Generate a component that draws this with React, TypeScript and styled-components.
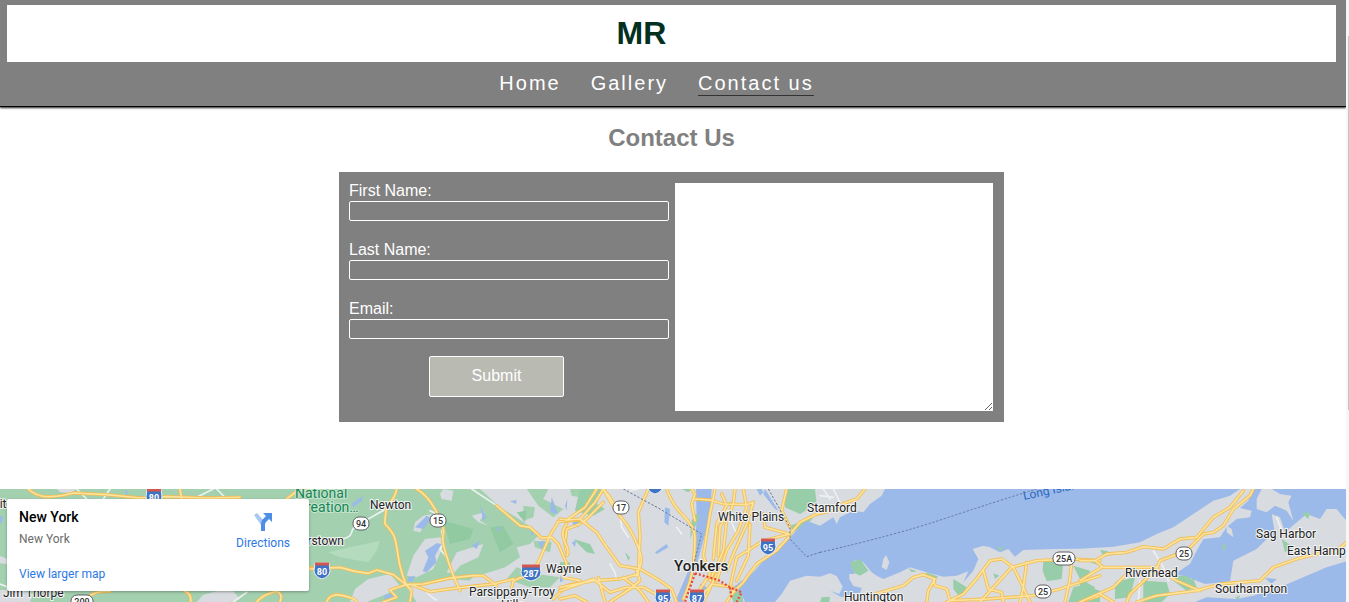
import React from "react";
import styled, { createGlobalStyle } from "styled-components";

const GlobalStyle = createGlobalStyle`
  * { box-sizing: border-box; }
  body {
    margin: 0;
    background: #fff;
    font-family: "Liberation Sans", Arial, sans-serif;
  }
`;

const Shell = styled.div`
  display: flex;
  min-height: 100vh;
`;

const Page = styled.div`
  flex: 1;
  min-width: 0;
`;

const ScrollRail = styled.div`
  width: 3px;
  padding: 36px 0 0 2px;
  background: #f7f7f7;
`;

const ScrollThumb = styled.div`
  height: 374px;
  background: #c4c4c4;
`;

const Header = styled.header`
  padding: 5px 10px 0 7px;
  background: #808080;
  border-bottom: 1px solid #000;
  box-shadow: 0 1px 2px #222;
`;

const Brand = styled.h1`
  margin: 0;
  padding-right: 60px;
  background: #fff;
  color: #03301f;
  font-size: 32px;
  line-height: 57px;
  text-align: center;
`;

const Nav = styled.nav`
  display: flex;
  justify-content: center;
  gap: 30px;
  height: 44px;
  padding: 8px 30px 0 0;
`;

const NavLink = styled.a<{ $active?: boolean }>`
  height: 26px;
  border-bottom: 1px solid ${(p) => (p.$active ? "#333" : "transparent")};
  color: #fff;
  font-size: 20px;
  line-height: 26px;
  letter-spacing: 2px;
  text-decoration: none;
`;

const Main = styled.main`
  padding: 17px 10px 67px 7px;
`;

const Heading = styled.h2`
  margin: 0 0 20px;
  color: #808080;
  font-size: 24px;
  line-height: 28px;
  text-align: center;
`;

const Form = styled.form`
  display: grid;
  grid-template-columns: minmax(0, 320fr) minmax(0, 318fr);
  gap: 6px;
  max-width: 665px;
  margin: 0 auto;
  padding: 9px 11px 11px 10px;
  background: #808080;
`;

const Fields = styled.div`
  min-width: 0;
`;

const Field = styled.div`
  margin-bottom: 19px;

  &:last-of-type {
    margin-bottom: 17px;
  }
`;

const Label = styled.label`
  display: block;
  color: #fff;
  font-size: 16px;
  line-height: 20px;
`;

const Input = styled.input`
  display: block;
  width: 100%;
  height: 20px;
  padding: 0 4px;
  border: 1px solid #fff;
  border-radius: 2px;
  background: transparent;
  color: #fff;
`;

const Submit = styled.button`
  display: block;
  width: 135px;
  height: 41px;
  margin-left: 25%;
  padding: 0 0 2px;
  border: 1px solid #fff;
  border-radius: 2px;
  background: #b9bab2;
  color: #fff;
  font: 16px "Liberation Sans", Arial, sans-serif;
`;

const Message = styled.textarea`
  display: block;
  width: 100%;
  height: 228px;
  margin-top: 2px;
  padding: 4px;
  border: 0;
  background: #fff;
  resize: both;
`;

const MapArea = styled.section`
  position: relative;
  height: 113px;
  overflow: hidden;
  background: #d8dbdf;
  font-family: Roboto, sans-serif;
`;

const MapDrawing = styled.svg`
  display: block;
  width: 100%;
  height: 100%;
`;

const PlaceCard = styled.div`
  position: absolute;
  top: 10px;
  left: 7px;
  display: flex;
  justify-content: space-between;
  width: 302px;
  height: 92px;
  padding: 9px 19px 9px 12px;
  border-radius: 2px;
  background: #fff;
  box-shadow: 0 1px 3px rgba(0, 0, 0, 0.3);
`;

const PlaceInfo = styled.div`
  display: flex;
  flex-direction: column;
  font-size: 12px;
  line-height: 16px;
`;

const PlaceName = styled.strong`
  font-size: 14px;
  font-weight: 500;
  line-height: 18px;
`;

const PlaceRegion = styled.span`
  margin: 5px 0 19px;
  color: #6b6b6b;
`;

const MapLink = styled.a`
  color: #2b78e4;
  font-size: 12px;
  line-height: 16px;
  text-decoration: none;
`;

const DirectionsLink = styled(MapLink)`
  display: flex;
  flex-direction: column;
  align-items: center;
  gap: 3px;
  padding-top: 4px;
`;

type Place = { x: number; y: number; text: string; size?: number; color?: string };

const places: Place[] = [
  { x: -7, y: 19, text: "nit" },
  { x: 295, y: 9, text: "National", size: 14, color: "#188455" },
  { x: 306, y: 23, text: "reation…", size: 14, color: "#188455" },
  { x: 370, y: 20, text: "Newton" },
  { x: 301, y: 56, text: "erstown" },
  { x: 3, y: 108, text: "Jim Thorpe" },
  { x: 469, y: 107, text: "Parsippany-Troy" },
  { x: 501, y: 120, text: "Hills" },
  { x: 546, y: 84, text: "Wayne" },
  { x: 718, y: 32, text: "White Plains" },
  { x: 807, y: 23, text: "Stamford" },
  { x: 674, y: 82, text: "Yonkers", size: 15 },
  { x: 844, y: 112, text: "Huntington" },
  { x: 1125, y: 88, text: "Riverhead" },
  { x: 1215, y: 104, text: "Southampton" },
  { x: 1256, y: 49, text: "Sag Harbor" },
  { x: 1287, y: 66, text: "East Hamp" },
];

const routes = [
  { x: 361, y: 35, text: "94" },
  { x: 438, y: 32, text: "15" },
  { x: 621, y: 19, text: "17" },
  { x: 1064, y: 70, text: "25A" },
  { x: 1043, y: 103, text: "25" },
  { x: 1184, y: 65, text: "25" },
  { x: 82, y: 113, text: "209" },
];

const interstates = [
  { x: 154, y: 8, text: "80" },
  { x: 322, y: 82, text: "80" },
  { x: 531, y: 84, text: "287" },
  { x: 768, y: 58, text: "95" },
  { x: 663, y: 109, text: "95" },
  { x: 697, y: 109, text: "87" },
  { x: 655, y: -3, text: "" },
];

/* Each map section is drawn on a 3x grid and placed by its left edge. */
const sections = [
  {
    left: 0,
    green: ["M0 15H960V354H0Z"],
    land: [
      "M0 215L22 225V240L0 238Z",
      "M0 318L60 318 100 330 90 354H0Z",
      "M170 15L230 15 210 28 180 24Z",
      "M590 354L610 332 650 322 700 322 720 345 690 354Z",
    ],
    water: ["M0 95L10 100 4 120 0 115Z", "M830 322L845 330 848 354 838 345Z", "M375 15L385 28 378 35Z"],
    minor: ["M230 15L260 45", "M330 15L310 45", "M590 40L640 15", "M650 15L680 45", "M700 354L740 325", "M0 300L25 310"],
    roads: ["M85 15Q110 40 150 38T220 27L320 32 420 42 500 38 620 42 720 40", "M540 15L545 45", "M860 45L890 22 960 15", "M270 335Q290 320 330 322", "M555 322Q575 330 572 354", "M770 354Q790 330 830 322 850 330 840 354", "M925 250L960 255"],
  },
  {
    left: 900,
    green: [
      "M0 15H540L600 70 665 110 720 150 690 180 650 190 660 220 615 250 520 280 460 330 420 354H0Z",
      "M670 65L705 70 700 100 670 110Z",
      "M680 15L745 15 730 45 790 75 760 100 715 65Z",
      "M810 15H840V40L815 35Z",
      "M700 170L755 175 750 205 705 190Z",
      "M650 250L710 270 780 280 750 310 690 310 620 285Z",
    ],
    shade: ["M430 110L520 135 510 165 450 180Z", "M570 130L610 125 640 180 600 205Z", "M650 85L680 80 675 115Z"],
    land: [
      "M430 15L460 20 455 50 425 45 420 30Z",
      "M370 95L395 90 360 145 340 140 345 115Z",
      "M375 165L425 160 430 185 400 255 350 280 320 275 340 215Z",
      "M515 95L555 85 540 110 565 125 535 115Z",
      "M470 205L550 180 535 220 480 245 460 270 440 265Z",
      "M205 285L270 270 300 305 260 330 200 354H150L165 315Z",
      "M320 310L455 285 560 295 570 320 500 354H350Z",
    ],
    pale: ["M85 205L150 190 240 170 230 200 205 235 120 220Z"],
    water: [
      "M375 200L410 178 425 180 405 215 410 235 380 265 368 262 385 220Z",
      "M345 130L380 95 395 102 370 135Z",
      "M155 60L190 35 185 50 160 70Z",
      "M325 280L345 275 340 290 322 295Z",
      "M255 332L285 328 280 342 252 345Z",
      "M540 65L560 100 550 110Z",
      "M755 40L775 90 750 85Z",
      "M590 130L600 132 598 148Z",
      "M515 185L540 170 530 195Z",
      "M630 52L650 48 648 60Z",
      "M715 175L735 170 725 195Z",
      "M815 105L840 112 835 130 820 125Z",
      "M795 65L802 45 800 80Z",
      "M690 150L700 140 698 155Z",
    ],
    minor: ["M115 165Q150 165 155 145T175 125", "M205 105L240 85 290 60", "M515 15L595 68", "M390 80L410 90M425 140L430 180 420 195 440 220", "M370 310Q390 340 410 348"],
    roads: [
      "M290 15Q285 40 270 55T255 120Q280 145 285 165T295 220 318 302",
      "M350 15Q385 35 410 85T430 150 435 200 460 275",
      "M0 245L25 255 120 250 165 262 205 268 230 258 280 272 318 302 370 300 450 282 520 275 550 275 590 305",
      "M318 302L270 318 290 340 250 354M318 302L335 320 330 354M335 302L390 323 470 312 580 300 640 285",
      "M590 65L660 125 690 130 725 162 755 160",
      "M840 108L775 112 750 155 715 235 690 270 640 290 635 310",
      "M755 160L775 180 800 240 790 280 840 290",
      "M760 345L800 305 840 295",
      "M840 120L800 135 795 180 800 205",
      "M80 354Q90 325 130 335T170 354",
      "M460 275L480 320",
    ],
  },
  {
    left: 1680,
    green: ["M60 15H130L110 60 135 75 100 95 45 80Z", "M675 15L765 15 770 60 720 90 675 70Z", "M40 165L90 180 105 210 80 205Z", "M405 90L420 95 400 140 390 165 395 110Z", "M365 15H395L385 25Z", "M690 125L760 100 740 125 700 145Z", "M505 310L545 315 550 354H520Z", "M195 205L210 220 205 230Z", "M510 55L525 50 520 70Z", "M0 235H30V265H0Z"],
    water: ["M408 15H455L450 95 425 190 405 260 370 354H345L400 225 410 110Z", "M285 205L320 180 325 190 290 210Z", "M315 70L330 75 325 125 313 115Z", "M35 175L48 170 45 190Z", "M590 15L600 35 610 25 605 15Z", "M615 15L655 80 645 75 610 30Z", "M420 300L440 310 435 330 420 325Z", "M0 275L10 290 0 295Z"],
    minor: ["M180 85L185 130 205 160", "M150 240L165 265 170 290", "M235 15L210 20", "M350 130L365 150", "M500 80L530 150 500 210"],
    roads: [
      "M130 15L105 55 60 105 20 108 0 105",
      "M60 105L110 145 140 190 180 245 240 255 300 290 335 315 350 354",
      "M20 120Q0 145 15 175T20 215",
      "M130 15Q155 60 165 75T195 115 235 190 230 260",
      "M130 15L150 40 165 65M130 55L70 115",
      "M265 15L235 85 240 155 235 270 180 285 100 290 0 310",
      "M320 15Q335 60 370 95T405 160 400 240 370 345",
      "M395 15L405 30 395 60 405 110",
      "M405 45L450 48 490 60 560 62 580 55",
      "M110 15L75 70 20 108",
      "M465 15L450 90 430 215 450 270 395 354",
      "M485 30L500 65 470 120 460 225",
      "M525 15L520 60 500 110 490 200 450 290",
      "M550 15L560 70 535 140 500 200 470 290",
      "M580 55L560 120 520 210 500 260",
      "M500 90L480 130 475 215",
      "M840 75L770 90 720 115 690 150 610 170 555 205 530 220 510 310 520 325",
      "M610 90L615 130 690 150M570 120L565 215 530 290",
      "M680 15L665 80 690 130",
      "M690 155L650 200 590 240 550 295 520 325 500 354",
      "M0 320L60 300 100 285 150 325 200 310 250 310 330 354",
      "M115 280L135 354M150 354L210 315 240 290 230 260",
      "M190 280L240 320 265 354M0 345L45 335 80 354",
      "M410 354L455 300 520 310M430 354L470 270",
    ],
    red: ["M405 268L375 354M405 268L475 288 510 310 545 325 530 354M510 310L515 345"],
    ferry: ["M190 15L300 75 425 150 400 245", "M625 15L690 130V165L740 218 780 205"],
  },
  {
    left: 2460,
    water: [
      "M195 15L185 35 150 60 130 85 100 80 60 100 50 120 40 100 0 125 -40 110 -75 145 -95 165 -130 195 -170 230 -200 265 -235 290 -260 310 -235 330 -225 354H-135L-115 330 -90 290 -40 275 0 278 30 268 50 276 68 308 58 330 30 320 65 340 100 328 118 332 125 312 100 306 88 285 88 270 104 270 95 240 105 228 130 235 155 265 170 275 190 285 240 265 270 250 320 265 370 278 410 275 445 262 430 295 460 260 475 225 458 195 490 185 510 190 540 205 565 195 585 218 610 198 700 195 780 194 880 188 960 175 1010 150 1060 130 1120 90 1180 50 1230 35 1260 15Z",
    ],
    land: ["M185 250L190 225 198 213 208 235 200 258Z", "M-5 300L-50 310 -60 345 -75 330 -70 354H20L25 320Z"],
    green: ["M90 235L120 225 145 260 120 275 100 265Z", "M265 253L290 262 275 265Z", "M320 265L355 278 340 288 315 278Z", "M400 285L440 310 420 340 400 315Z", "M520 268L538 275 525 285Z", "M530 190L555 192 540 200Z", "M670 230L730 232 725 285 680 292 668 260Z", "M760 245L810 260 800 300 760 310 745 354H840V320L790 305Z", "M800 230L840 222V245Z", "M5 340L30 338 28 354H0Z"],
    roads: [
      "M65 60L110 45 135 15",
      "M165 330L250 305 280 280 310 272 345 285 325 320 320 354",
      "M340 285L345 305 380 315 390 350 500 345 640 335 720 315 840 275",
      "M380 354L430 330 465 290 510 230 545 225 580 250 610 310 600 354",
      "M480 354L575 250 650 230 760 225 840 230",
      "M490 260L505 315 545 325 550 354",
      "M620 235L610 310 630 354M755 235L750 285 735 354",
      "M780 354L840 335",
    ],
    minor: ["M10 15L30 45M40 15L60 55M0 35L40 40"],
    ferry: ["M0 205Q220 155 370 105T650 15"],
  },
  {
    left: 3240,
    water: [
      "M520 15L505 50 480 72 515 80 510 100 470 105 440 130 420 160 370 165 350 200 330 240 285 270 320 278 350 290 375 300 450 292 460 230 490 215 530 195 560 165 585 150 575 90 600 100 615 145 680 90 720 105 740 75 770 75 790 100 800 110V15Z",
      "M800 232L740 250 680 275 600 310 520 335 470 345 380 340 345 354H800Z",
      "M555 282L590 285 575 300Z",
    ],
    land: ["M545 15L530 45 530 75 560 85 585 65 620 80 640 110 625 55 635 35 600 30 575 15Z", "M440 125L455 135 460 160 440 145Z"],
    green: [
      "M0 255L10 290 45 310 35 340 0 354Z",
      "M60 198L85 202 70 215Z",
      "M105 295L165 280 150 340 105 345Z",
      "M190 290L260 295 270 330 245 354H190Z",
      "M280 290L340 285 350 310 320 320Z",
      "M605 165L640 190 615 205Z",
      "M425 180L440 185 433 202Z",
      "M665 88L690 85 685 105Z",
      "M260 275L320 275 340 290 300 290Z",
      "M465 340L480 335 475 348Z",
    ],
    roads: [
      "M0 230L45 230 80 210 140 205 190 188 250 195 300 165 350 160 400 100 450 70 490 20",
      "M520 15L510 35 460 75 430 125 400 145 370 150 320 200 240 230 230 255 150 330 140 354",
      "M45 230L70 250 230 250M0 290L65 250",
      "M0 354L100 310 150 260M60 330L100 354",
      "M170 354L230 335 350 320 420 300 540 290 580 250 650 225 730 205 765 205 800 175",
      "M230 255L290 290 360 320",
    ],
    minor: ["M220 200L250 250 265 290M180 290L175 354M590 100L605 140"],
  },
];

function Strokes({ paths, ...rest }: { paths?: string[] } & React.SVGProps<SVGPathElement>) {
  return <path d={(paths ?? []).join(" ")} fill="none" strokeLinejoin="round" strokeLinecap="round" {...rest} />;
}

function RegionMap() {
  return (
    <MapDrawing role="img" aria-label="Map of New York">
      {sections.map((s) => (
        <g key={s.left} transform={`translate(${s.left / 3} -5) scale(0.33333)`}>
          {s.left < 1680 && <path d={s.green?.join(" ")} fill="#a3d1b0" />}
          <path d={s.shade?.join(" ")} fill="#91c9a0" />
          <path d={s.pale?.join(" ")} fill="#b5dbbe" />
          {s.left < 1680 && <path d={s.land?.join(" ")} fill="#d8dbdf" />}
          <path d={s.water?.join(" ")} fill="#9bbaea" />
          {s.left >= 1680 && <path d={s.land?.join(" ")} fill="#d8dbdf" />}
          {s.left >= 1680 && <path d={s.green?.join(" ")} fill="#98cdaa" />}
        </g>
      ))}
      {sections.map((s) => (
        <g key={s.left} transform={`translate(${s.left / 3} -5) scale(0.33333)`}>
          <Strokes paths={s.minor} stroke="#eef1f1" strokeWidth="5" />
          <Strokes paths={s.roads} stroke="#f1bd55" strokeWidth="10" />
          <Strokes paths={s.roads} stroke="#fde49c" strokeWidth="5" />
          <Strokes paths={s.ferry} stroke="#65779a" strokeWidth="3" strokeDasharray="7 5" strokeLinecap="butt" />
          <Strokes paths={s.red} stroke="#eb493d" strokeWidth="7" strokeDasharray="6 6" strokeLinecap="butt" />
        </g>
      ))}
      {interstates.map((r, i) => (
        <g key={i} transform={`translate(${r.x} ${r.y})`}>
          <path d={r.text.length > 2 ? "M-9-8H9L10 0Q9 6 0 8Q-9 6-10 0Z" : "M-7-8H7L8 0Q7 6 0 8Q-7 6-8 0Z"} fill="#3f74c4" stroke="#e8edf5" />
          <path d={r.text.length > 2 ? "M-9-7H9" : "M-7-7H7"} stroke="#d3554f" strokeWidth="3" />
          {r.text && <text y="4" textAnchor="middle" fontSize="9" fontWeight="700" fill="#fff">{r.text}</text>}
        </g>
      ))}
      {routes.map((r, i) => {
        const w = r.text.length > 2 ? 22 : 16;
        return (
          <g key={i} transform={`translate(${r.x} ${r.y})`}>
            <rect x={-w / 2} y="-7" width={w} height="13" rx="6" fill="#fff" stroke="#5d6063" />
            <text y="3" textAnchor="middle" fontSize="9" fontWeight="500" fill="#333">{r.text}</text>
          </g>
        );
      })}
      {places.map((p) => (
        <text
          key={p.text}
          x={p.x}
          y={p.y}
          fontSize={p.size ?? 12}
          fontWeight={p.text === "Yonkers" ? 500 : 400}
          fill={p.color ?? "#222"}
          stroke={p.color ? "#c5e5cf" : "#f2f4f4"}
          strokeWidth="2"
          paintOrder="stroke"
        >
          {p.text}
        </text>
      ))}
      <text transform="translate(1024 11) rotate(-12)" fontSize="12" fill="#2b67bd">Long Island Sound</text>
    </MapDrawing>
  );
}

function DirectionsIcon() {
  return (
    <svg width="20" height="20" viewBox="0 0 20 20" aria-hidden="true">
      <path d="M1 3L4 1 11 9V13H8Z" fill="#a9c9f4" />
      <path d="M8 19V12Q8 9 10 7L13 4 10 1H19V10L16 7 13 10Q12 11 12 13V19Z" fill="#4d8fe5" />
    </svg>
  );
}

const fields = [
  { id: "first-name", label: "First Name:", type: "text" },
  { id: "last-name", label: "Last Name:", type: "text" },
  { id: "email", label: "Email:", type: "email" },
];

export default function App() {
  return (
    <Shell>
      <GlobalStyle />
      <Page>
        <Header>
          <Brand>MR</Brand>
          <Nav>
            <NavLink href="#home">Home</NavLink>
            <NavLink href="#gallery">Gallery</NavLink>
            <NavLink href="#contact" $active aria-current="page">Contact us</NavLink>
          </Nav>
        </Header>
        <Main>
          <Heading>Contact Us</Heading>
          <Form onSubmit={(e) => e.preventDefault()}>
            <Fields>
              {fields.map((f) => (
                <Field key={f.id}>
                  <Label htmlFor={f.id}>{f.label}</Label>
                  <Input id={f.id} name={f.id} type={f.type} />
                </Field>
              ))}
              <Submit type="submit">Submit</Submit>
            </Fields>
            <Message name="message" aria-label="Message" />
          </Form>
        </Main>
        <MapArea>
          <RegionMap />
          <PlaceCard>
            <PlaceInfo>
              <PlaceName>New York</PlaceName>
              <PlaceRegion>New York</PlaceRegion>
              <MapLink href="#map">View larger map</MapLink>
            </PlaceInfo>
            <DirectionsLink href="#directions">
              <DirectionsIcon />
              Directions
            </DirectionsLink>
          </PlaceCard>
        </MapArea>
      </Page>
      <ScrollRail>
        <ScrollThumb />
      </ScrollRail>
    </Shell>
  );
}
